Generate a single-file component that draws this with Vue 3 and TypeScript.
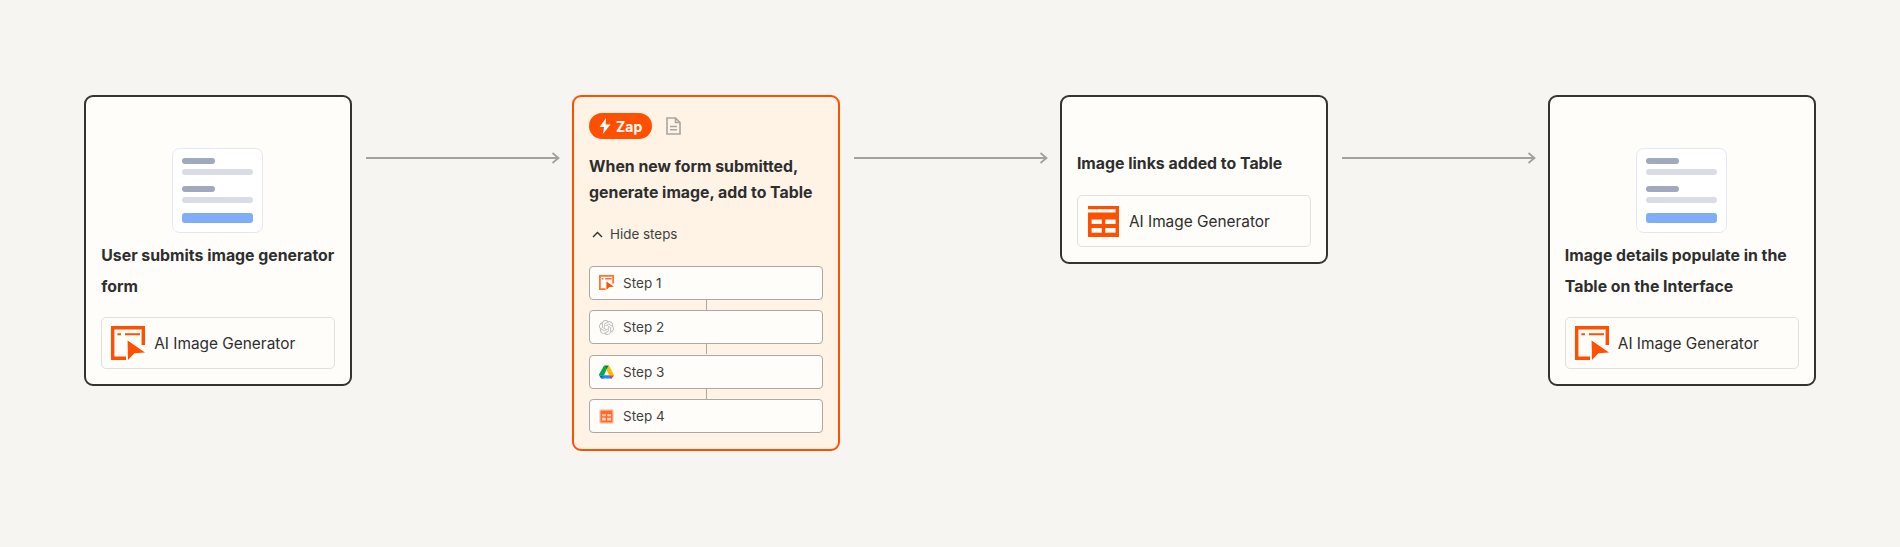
<script setup lang="ts">
const steps = ['Step 1', 'Step 2', 'Step 3', 'Step 4']
</script>

<template>
  <main class="flow">
    <section class="card">
      <svg class="form" width="92" height="86" viewBox="0 0 92 86" aria-hidden="true">
        <rect x="0.5" y="0.5" width="90" height="84" rx="7" fill="#fff" stroke="#e4e7f0" />
        <rect x="10" y="10" width="33" height="6" rx="3" fill="#a0a9bd" />
        <rect x="10" y="21" width="71" height="6" rx="3" fill="#d9dce5" />
        <rect x="10" y="38" width="33" height="6" rx="3" fill="#a0a9bd" />
        <rect x="10" y="49" width="71" height="6" rx="3" fill="#d9dce5" />
        <rect x="10" y="65" width="71" height="10" rx="3" fill="#7fadf7" />
      </svg>
      <h2 class="title tall">User submits image generator form</h2>
      <div class="app">
        <svg class="app-icon" width="34" height="34" viewBox="0 0 34 34" aria-hidden="true">
          <path fill="#ff4f00" d="M0 0H34V19H30.6V3.4H3.4V30.6H15V34H0Z" />
          <path fill="#ff4f00" d="M6.4 7.3H10V9.3H6.4ZM14 7.3H29V9.3H14ZM16.6 14.6 34 26.6 23.4 27.2 17 34Z" />
        </svg>
        <span>AI Image Generator</span>
      </div>
    </section>

    <div class="arrow">
      <svg width="194" height="12" viewBox="0 0 194 12" aria-hidden="true">
        <path d="M0 6H192M186.5 1 192.5 6 186.5 11" fill="none" stroke="#a3a19b" stroke-width="1.8" />
      </svg>
    </div>

    <section class="card zap">
      <header class="zap-head">
        <span class="badge">
          <svg width="12" height="16" viewBox="0 0 12 16" aria-hidden="true">
            <path fill="#fffdf9" d="M7 0 0.6 9H5L4 16 11.4 6.4H6.6Z" />
          </svg>
          Zap
        </span>
        <svg width="15" height="18" viewBox="0 0 15 18" aria-hidden="true">
          <path fill="none" stroke="#a8a6a0" stroke-width="1.6" d="M1 1H9.5L14 5.5V17H1ZM9.5 1V5.5H14" />
          <path fill="none" stroke="#a8a6a0" stroke-width="1.4" d="M4 9.5H11M4 12.8H11" />
        </svg>
      </header>
      <h2 class="title">When new form submitted, generate image, add to Table</h2>
      <div class="hide">
        <svg width="11" height="7" viewBox="0 0 11 7" aria-hidden="true">
          <path d="M1 6 5.5 1.5 10 6" fill="none" stroke="#2d2e2e" stroke-width="1.4" />
        </svg>
        <span>Hide steps</span>
      </div>
      <ol class="steps">
        <li v-for="(step, i) in steps" :key="step" class="step">
          <svg v-if="i === 0" width="15" height="15" viewBox="0 0 34 34" aria-hidden="true">
            <path fill="#ff4f00" opacity=".8" d="M0 0H34V19H30V4H4V30H15V34H0Z" />
            <path fill="#ff4f00" opacity=".8" d="M6 7H10V10H6ZM14 7H29V10H14Z" />
            <path fill="#ff4f00" d="M16.6 14.6 34 26.6 23.4 27.2 17 34Z" />
          </svg>
          <svg v-else-if="i === 1" width="15" height="15" viewBox="0 0 24 24" aria-hidden="true">
            <path fill="#bdbcb9" d="M22.2819 9.8211a5.9847 5.9847 0 0 0-.5157-4.9108 6.0462 6.0462 0 0 0-6.5098-2.9A6.0651 6.0651 0 0 0 4.9807 4.1818a5.9847 5.9847 0 0 0-3.9977 2.9 6.0462 6.0462 0 0 0 .7427 7.0966 5.98 5.98 0 0 0 .511 4.9107 6.051 6.051 0 0 0 6.5146 2.9001A5.9847 5.9847 0 0 0 13.2599 24a6.0557 6.0557 0 0 0 5.7718-4.2058 5.9894 5.9894 0 0 0 3.9977-2.9001 6.0557 6.0557 0 0 0-.7475-7.0729zm-9.022 12.6081a4.4755 4.4755 0 0 1-2.8764-1.0408l.1419-.0804 4.7783-2.7582a.7948.7948 0 0 0 .3927-.6813v-6.7369l2.02 1.1686a.071.071 0 0 1 .038.052v5.5826a4.504 4.504 0 0 1-4.4945 4.4944zm-9.6607-4.1254a4.4708 4.4708 0 0 1-.5346-3.0137l.142.0852 4.783 2.7582a.7712.7712 0 0 0 .7806 0l5.8428-3.3685v2.3324a.0804.0804 0 0 1-.0332.0615L9.74 19.9502a4.4992 4.4992 0 0 1-6.1408-1.6464zM2.3408 7.8956a4.485 4.485 0 0 1 2.3655-1.9728V11.6a.7664.7664 0 0 0 .3879.6765l5.8144 3.3543-2.0201 1.1685a.0757.0757 0 0 1-.071 0l-4.8303-2.7865A4.504 4.504 0 0 1 2.3408 7.872zm16.5963 3.8558L13.1038 8.364 15.1192 7.2a.0757.0757 0 0 1 .071 0l4.8303 2.7913a4.4944 4.4944 0 0 1-.6765 8.1042v-5.6772a.79.79 0 0 0-.407-.667zm2.0107-3.0231l-.142-.0852-4.7735-2.7818a.7759.7759 0 0 0-.7854 0L9.409 9.2297V6.8974a.0662.0662 0 0 1 .0284-.0615l4.8303-2.7866a4.4992 4.4992 0 0 1 6.6802 4.66zM8.3065 12.863l-2.02-1.1638a.0804.0804 0 0 1-.038-.0567V6.0742a4.4992 4.4992 0 0 1 7.3757-3.4537l-.142.0805L8.704 5.459a.7948.7948 0 0 0-.3927.6813zm1.0976-2.3654l2.602-1.4998 2.6069 1.4998v2.9994l-2.5974 1.4997-2.6067-1.4997Z" />
          </svg>
          <svg v-else-if="i === 2" width="15" height="14" viewBox="0 0 24 21" aria-hidden="true">
            <path fill="#0066da" d="M0 15.5 3.4 21H7.5L8 15.5Z" />
            <path fill="#00ac47" d="M12 7 8 0 0 14.5V15.5H8Z" />
            <path fill="#ea4335" d="M20.5 21 24 15.5H16L18 21Z" />
            <path fill="#00832d" d="M12 7 16 0H8Z" />
            <path fill="#2684fc" d="M16 15.5H8L3.4 21H20.5Z" />
            <path fill="#ffba00" d="M16 0 12 7 16 15.5H24Z" />
          </svg>
          <svg v-else width="15" height="15" viewBox="0 0 31 31" aria-hidden="true">
            <rect width="31" height="31" rx="4" fill="#ff4f00" opacity=".22" />
            <path fill="#ff4f00" opacity=".8" fill-rule="evenodd" d="M3 3H28V28H3ZM6 11V15H14V11ZM17 11V15H25V11ZM6 18V24H14V18ZM17 18V24H25V18Z" />
          </svg>
          <span>{{ step }}</span>
        </li>
      </ol>
    </section>

    <div class="arrow">
      <svg width="194" height="12" viewBox="0 0 194 12" aria-hidden="true">
        <path d="M0 6H192M186.5 1 192.5 6 186.5 11" fill="none" stroke="#a3a19b" stroke-width="1.8" />
      </svg>
    </div>

    <section class="card table-card">
      <h2 class="title">Image links added to Table</h2>
      <div class="app">
        <svg class="table-icon" width="31" height="31" viewBox="0 0 31 31" aria-hidden="true">
          <path fill="#ff4f00" fill-rule="evenodd" d="M0 0H31V31H0V6.4H27.6V3.2H0ZM3.6 13.4V18H13.8V13.4ZM17.2 13.4V18H27.6V13.4ZM3.6 22V26.8H13.8V22ZM17.2 22V26.8H27.6V22Z" />
        </svg>
        <span>AI Image Generator</span>
      </div>
    </section>

    <div class="arrow">
      <svg width="194" height="12" viewBox="0 0 194 12" aria-hidden="true">
        <path d="M0 6H192M186.5 1 192.5 6 186.5 11" fill="none" stroke="#a3a19b" stroke-width="1.8" />
      </svg>
    </div>

    <section class="card">
      <svg class="form" width="92" height="86" viewBox="0 0 92 86" aria-hidden="true">
        <rect x="0.5" y="0.5" width="90" height="84" rx="7" fill="#fff" stroke="#e4e7f0" />
        <rect x="10" y="10" width="33" height="6" rx="3" fill="#a0a9bd" />
        <rect x="10" y="21" width="71" height="6" rx="3" fill="#d9dce5" />
        <rect x="10" y="38" width="33" height="6" rx="3" fill="#a0a9bd" />
        <rect x="10" y="49" width="71" height="6" rx="3" fill="#d9dce5" />
        <rect x="10" y="65" width="71" height="10" rx="3" fill="#7fadf7" />
      </svg>
      <h2 class="title tall">Image details populate in the Table on the Interface</h2>
      <div class="app">
        <svg class="app-icon" width="34" height="34" viewBox="0 0 34 34" aria-hidden="true">
          <path fill="#ff4f00" d="M0 0H34V19H30.6V3.4H3.4V30.6H15V34H0Z" />
          <path fill="#ff4f00" d="M6.4 7.3H10V9.3H6.4ZM14 7.3H29V9.3H14ZM16.6 14.6 34 26.6 23.4 27.2 17 34Z" />
        </svg>
        <span>AI Image Generator</span>
      </div>
    </section>
  </main>
</template>

<style>
html,
body {
  margin: 0;
  background: #f7f5f2;
}
</style>

<style scoped>
.flow {
  box-sizing: border-box;
  height: 547px;
  padding-top: 95px;
  display: flex;
  justify-content: center;
  align-items: flex-start;
  font-family: Inter, "Liberation Sans", sans-serif;
  color: #2d2e2e;
}
.card {
  box-sizing: border-box;
  width: 268px;
  flex: none;
  display: flex;
  flex-direction: column;
  padding: 51px 15px 15px;
  background: #fffdf9;
  border: 2px solid #333;
  border-radius: 9px;
}
.form {
  align-self: center;
  flex: none;
}
.title {
  margin: 0;
  font-size: 15.85px;
  font-weight: 700;
  line-height: 26px;
}
.title.tall {
  margin-top: 6px;
  line-height: 31px;
}
.app {
  box-sizing: border-box;
  display: flex;
  align-items: center;
  gap: 9px;
  height: 52px;
  margin-top: 15px;
  padding-left: 9px;
  font-size: 15.4px;
  background: #fffdf9;
  border: 1px solid #e2e0db;
  border-radius: 5px;
}
.app-icon,
.table-icon {
  flex: none;
}
.table-card {
  padding-top: 54px;
}
.table-card .app {
  margin-top: 18px;
  gap: 10px;
  padding-left: 10px;
}
.arrow {
  box-sizing: border-box;
  width: 219.85px;
  flex: none;
  padding: 57px 10px 0 14px;
  display: flex;
}
.zap {
  background: #fff3e6;
  border-color: #ff4f00;
  padding-top: 16px;
  padding-bottom: 16px;
}
.zap-head {
  display: flex;
  align-items: center;
  gap: 14px;
}
.badge {
  display: inline-flex;
  align-items: center;
  justify-content: center;
  gap: 5px;
  width: 63px;
  height: 26px;
  color: #fffdf9;
  font-size: 14px;
  font-weight: 700;
  background: #ff4f00;
  border-radius: 13px;
}
.zap .title {
  margin-top: 15px;
}
.hide {
  display: flex;
  align-items: center;
  gap: 7px;
  margin-top: 18px;
  padding-left: 3px;
  font-size: 13.4px;
  line-height: 20px;
  color: #403f3e;
}
.steps {
  list-style: none;
  margin: 21.5px 0 0;
  padding: 0;
  display: flex;
  flex-direction: column;
  gap: 10.67px;
}
.step {
  position: relative;
  box-sizing: border-box;
  display: flex;
  align-items: center;
  gap: 9px;
  height: 34px;
  padding-left: 9px;
  font-size: 13.5px;
  color: #403f3e;
  background: #fffdf9;
  border: 1px solid #aaa8a2;
  border-radius: 4px;
}
.step:not(:last-child)::after {
  content: "";
  position: absolute;
  left: 50%;
  top: 100%;
  width: 1px;
  height: 11px;
  background: #aaa8a2;
}
</style>
